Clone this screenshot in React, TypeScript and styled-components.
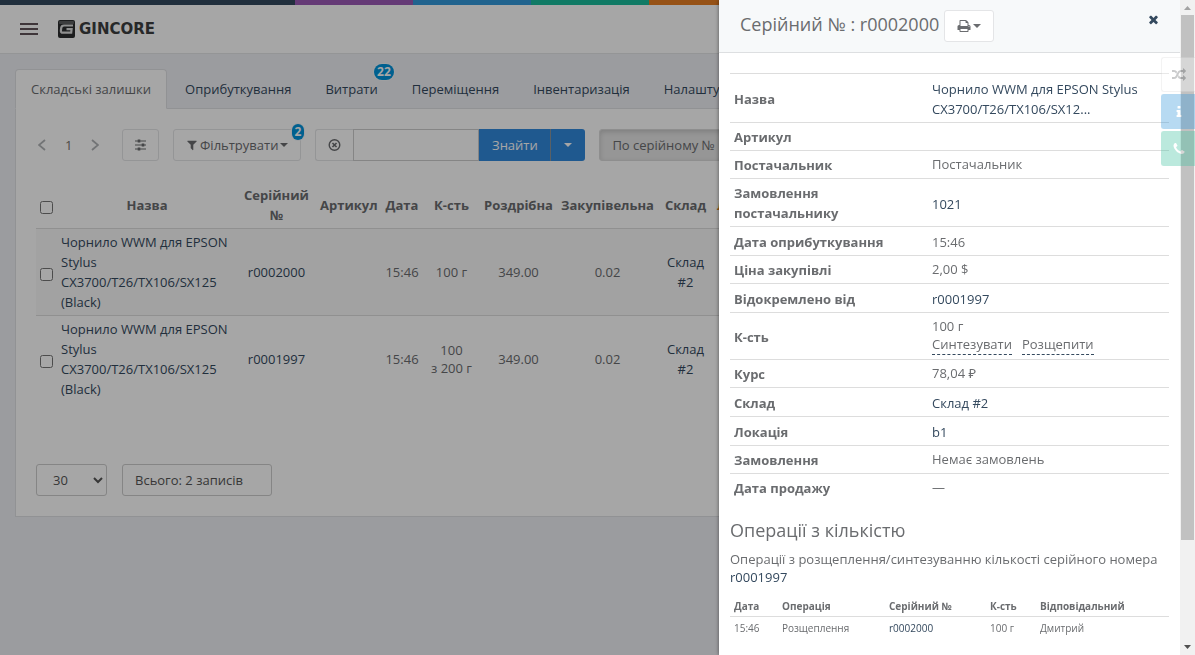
import React from "react";
import styled, { createGlobalStyle, css } from "styled-components";

const GlobalStyle = createGlobalStyle`
  *, *::before, *::after { box-sizing: border-box; }
  html, body { margin: 0; padding: 0; }
  body {
    background: #eff0f5;
    color: #6a6c6f;
    font-family: "Open Sans", "Noto Sans", sans-serif;
    font-size: 13px;
    line-height: 18px;
    overflow: hidden;
  }
  a { color: #34495e; text-decoration: none; }
  button, input, select { font-family: inherit; font-size: 13px; color: inherit; }
  h2, h3, p { margin: 0; font-weight: 400; }
`;

/* ---------- icons ---------- */

const glyphs = {
  times:
    "M1490 1322q0 40-28 68l-136 136q-28 28-68 28t-68-28l-294-294-294 294q-28 28-68 28t-68-28l-136-136q-28-28-28-68t28-68l294-294-294-294q-28-28-28-68t28-68l136-136q28-28 68-28t68 28l294 294 294-294q28-28 68-28t68 28l136 136q28 28 28 68t-28 68l-294 294 294 294q28 28 28 68z",
  filter:
    "M1595 295q17 41-14 70l-493 493v742q0 42-39 59-13 5-25 5-27 0-45-19l-256-256q-19-19-19-45v-486l-493-493q-31-29-14-70 17-39 59-39h1280q42 0 59 39z",
  print:
    "M448 1536h896v-256h-896v256zm0-640h896v-384h-160q-40 0-68-28t-28-68v-160h-640v640zm1152 64q0-26-19-45t-45-19-45 19-19 45 19 45 45 19 45-19 19-45zm128 0v416q0 13-9.5 22.5t-22.5 9.5h-224v160q0 40-28 68t-68 28h-960q-40 0-68-28t-28-68v-160h-224q-13 0-22.5-9.5t-9.5-22.5v-416q0-79 56.5-135.5t135.5-56.5h64v-544q0-40 28-68t68-28h672q40 0 88 20t76 48l152 152q28 28 48 76t20 88v256h64q79 0 135.5 56.5t56.5 135.5z",
  phone:
    "M1600 1240q0 27-10 70.5t-21 68.5q-21 50-122 106-94 51-186 51-27 0-53-3.5t-57.5-12.5-47-14.5-55.5-20.5-49-18q-98-35-175-83-127-79-264-216t-216-264q-48-77-83-175-3-9-18-49t-20.5-55.5-14.5-47-12.5-57.5-3.5-53q0-92 51-186 56-101 106-122 25-11 68.5-21t70.5-10q14 0 21 3 18 6 53 76 11 19 30 54t35 63.5 31 53.5q3 4 17.5 25t21.5 35.5 7 28.5q0 20-28.5 50t-62 55-62 53-28.5 46q0 9 5 22.5t8.5 20.5 14 24 11.5 19q76 137 174 235t235 174q2 1 19 11.5t24 14 20.5 8.5 22.5 5q18 0 46-28.5t53-62 55-62 50-28.5q14 0 28.5 7t35.5 21.5 25 17.5q25 15 53.5 31t63.5 35 54 30q70 35 76 53 3 7 3 21z",
  random:
    "M666 481q-60 92-137 273-22-45-37-72.5t-40.5-63.5-51-56.5-63-35-81.5-14.5h-224q-14 0-23-9t-9-23v-192q0-14 9-23t23-9h224q250 0 410 225zm1126 799q0 14-9 23l-320 320q-9 9-23 9-13 0-22.5-9.5t-9.5-22.5v-192q-32 0-85 .5t-81 1-73-1-71-5-64-10.5-63-18.5-58-28.5-59-40-55-53.5-56-69.5q59-93 136-273 22 45 37 72.5t40.5 63.5 51 56.5 63 35 81.5 14.5h256v-192q0-14 9-23t23-9q12 0 24 10l319 319q9 9 9 23zm0-896q0 14-9 23l-320 320q-9 9-23 9-13 0-22.5-9.5t-9.5-22.5v-192h-256q-48 0-87 15t-69 45-51 61.5-45 77.5q-32 62-78 171-29 66-49.5 111t-54 105-64 100-74 83-90 68.5-106.5 42-128 16.5h-224q-14 0-23-9t-9-23v-192q0-14 9-23t23-9h224q48 0 87-15t69-45 51-61.5 45-77.5q32-62 78-171 29-66 49.5-111t54-105 64-100 74-83 90-68.5 106.5-42 128-16.5h256v-192q0-14 9-23t23-9q12 0 24 10l319 319q9 9 9 23z",
  info:
    "M1216 1344v128q0 26-19 45t-45 19h-512q-26 0-45-19t-19-45v-128q0-26 19-45t45-19h64v-384h-64q-26 0-45-19t-19-45v-128q0-26 19-45t45-19h384q26 0 45 19t19 45v576h64q26 0 45 19t19 45zm-128-1152v192q0 26-19 45t-45 19h-256q-26 0-45-19t-19-45v-192q0-26 19-45t45-19h256q26 0 45 19t19 45z",
};

const Glyph = ({ name, size = 14 }: { name: keyof typeof glyphs; size?: number }) => (
  <svg width={size} height={size} viewBox="0 0 1792 1792" fill="currentColor" aria-hidden="true">
    <path d={glyphs[name]} />
  </svg>
);

const Caret = () => (
  <svg width="8" height="4" viewBox="0 0 8 4" fill="currentColor" aria-hidden="true">
    <path d="M0 0h8L4 4z" />
  </svg>
);

const Chevron = ({ flip = false }: { flip?: boolean }) => (
  <svg width="8" height="12" viewBox="0 0 8 12" fill="none" stroke="currentColor" strokeWidth="1.800" aria-hidden="true">
    <path d={flip ? "M1 1l6 5-6 5" : "M7 1L1 6l6 5"} />
  </svg>
);

const SlidersIcon = () => (
  <svg width="11" height="12" viewBox="0 0 11 12" stroke="currentColor" strokeWidth="1.200" aria-hidden="true">
    <path d="M0 2h11M0 6h11M0 10h11" />
    <path d="M4 .5v3M8 4.500v3M4 8.500v3" strokeWidth="2.600" />
  </svg>
);

const ClearIcon = () => (
  <svg width="14" height="14" viewBox="0 0 14 14" fill="none" stroke="currentColor" aria-hidden="true">
    <circle cx="7" cy="7" r="5.700" strokeWidth="1.500" />
    <path d="M4.800 4.800l4.400 4.400M9.200 4.800l-4.400 4.400" strokeWidth="1.700" />
  </svg>
);

const LogoMark = () => (
  <svg width="17" height="18" viewBox="0 0 17 18" aria-hidden="true">
    <rect width="17" height="18" rx="2" fill="#2b2d2f" />
    <rect x="1" y="1" width="15" height="3" rx="1" fill="#5c5e60" />
    <path d="M15 5.500H6Q3.500 5.500 3.200 8l-.3 2.500q-.2 2.200 2 2.200h8.300l.4-3.500H8.500" fill="none" stroke="#dcdcdc" strokeWidth="2.200" />
  </svg>
);

/* ---------- page ---------- */

const Shell = styled.div`
  min-height: 100vh;
  margin-right: 15px;
  overflow: hidden;
`;

const ColorLine = styled.div`
  height: 5px;
  background: linear-gradient(
    to right,
    #34495e 25%, #9b59b6 25%, #9b59b6 35%, #3498db 35%, #3498db 45%,
    #1abc9c 45%, #1abc9c 55%, #e67e22 55%, #e67e22 85%, #c0392b 85%
  );
`;

const TopBar = styled.header`
  display: flex;
  align-items: center;
  gap: 20px;
  height: 49px;
  padding: 0 20px;
  background: #fff;
  border-bottom: 1px solid #e4e5e7;
`;

const MenuButton = styled.button`
  display: flex;
  flex-direction: column;
  gap: 3px;
  width: 18px;
  padding: 0;
  border: 0;
  background: none;
`;

const MenuLine = styled.span`
  height: 2px;
  background: #62535a;
`;

const Brand = styled.a`
  display: flex;
  align-items: center;
  gap: 4px;
  color: #3c3e40;
  font: bold 15px/18px "DejaVu Sans", sans-serif;
`;

const Content = styled.main`
  padding: 15px;
`;

const Tabs = styled.nav`
  display: flex;
  gap: 2px;
`;

const Tab = styled.a<{ $active?: boolean }>`
  position: relative;
  padding: 10px 15px 8px;
  border: 1px solid transparent;
  border-radius: 4px 4px 0 0;
  white-space: nowrap;
  line-height: 19px;
  ${(p) =>
    p.$active &&
    css`
      margin-bottom: -1px;
      padding-bottom: 9px;
      color: #6a6c6f;
      background: #fff;
      border-color: #dfe0e4;
      border-bottom-color: #fff;
    `}
`;

const Badge = styled.span<{ $corner?: boolean }>`
  position: absolute;
  top: -6px;
  right: ${(p) => (p.$corner ? "-4px" : "-1px")};
  padding: 0 3px;
  border-radius: 8px;
  background: #0094dc;
  color: #fff;
  font-size: 12px;
  font-weight: 700;
  line-height: 16px;
  box-shadow: 0 0 0 1px #f4f6f9;
`;

const Panel = styled.section`
  padding: 20px;
  background: #fff;
  border: 1px solid #dfe0e4;
  overflow: hidden;
`;

const Toolbar = styled.div`
  display: flex;
  gap: 14px;
`;

const Pager = styled.div`
  display: flex;
  align-items: center;
  gap: 19px;
  width: 72px;
  padding-left: 2px;
  color: #b0b2b5;
`;

const PageButton = styled.button`
  display: flex;
  padding: 0;
  border: 0;
  background: none;
`;

const PageNumber = styled.span`
  color: #77736c;
`;

const Button = styled.button<{ $pressed?: boolean }>`
  position: relative;
  display: flex;
  align-items: center;
  justify-content: center;
  gap: 2px;
  height: 32px;
  padding: 0 12px;
  border: 1px solid #e4e5e7;
  border-radius: 3px;
  background: #fff;
  color: #6a6c6f;
  white-space: nowrap;
  ${(p) =>
    p.$pressed &&
    css`
      background: #e6e6e6;
      border-color: #dadada;
      box-shadow: inset 0 2px 5px rgba(0, 0, 0, 0.15);
    `}
`;

const SearchGroup = styled.form`
  display: flex;
`;

const ClearButton = styled(Button)`
  width: 38px;
  border-right: 0;
  border-radius: 3px 0 0 3px;
`;

const SearchInput = styled.input`
  width: 126px;
  height: 32px;
  padding: 0 12px;
  border: 1px solid #ccc;
  background: #fff;
  outline: 0;
`;

const SearchButton = styled(Button)`
  border: 0;
  border-radius: 0;
  background: #3189dc;
  color: #fff;
  width: 71px;
`;

const SearchMenuButton = styled(SearchButton)`
  width: 35px;
  border-left: 1px solid #8a949c;
  border-radius: 0 3px 3px 0;
`;

const Goods = styled.table`
  width: 1108px;
  margin: 21px 0 62px;
  border-collapse: separate;
  border-spacing: 0;
  table-layout: fixed;
  line-height: 20px;
  text-align: center;

  th, td {
    padding: 3px 4px;
    vertical-align: middle;
  }
  td { border-top: 1px solid #ddd; }
  tbody tr:nth-child(odd) td { background: #f9f9f9; }
`;

const NameCell = styled.td`
  text-align: left;
`;

const Quantity = styled.span`
  display: block;
  line-height: 18px;
  white-space: pre-line;
`;

const SortLink = styled.a`
  color: #e67e22;
`;

const Check = styled.input`
  display: block;
  width: 13px;
  height: 13px;
  margin: 4px 0 0;
`;

const PanelFooter = styled.div`
  display: flex;
  gap: 15px;
`;

const PageSize = styled.select`
  width: 71px;
  height: 32px;
  padding: 0 0 0 12px;
  border: 1px solid #ccc;
  border-radius: 3px;
  background: #fff;
  color: #555;
`;

const Total = styled.div`
  width: 150px;
  padding: 6px 12px;
  border: 1px solid #ccc;
  border-radius: 3px;
  color: #555;
`;

/* ---------- drawer ---------- */

const Backdrop = styled.div`
  position: fixed;
  inset: 0;
  z-index: 10;
  background: rgba(0, 0, 0, 0.35);
`;

const Drawer = styled.aside`
  position: fixed;
  top: 0;
  right: 0;
  bottom: 0;
  z-index: 11;
  display: flex;
  width: 476px;
  max-width: 100%;
  background: #fff;
  box-shadow: 0 0 4px rgba(0, 0, 0, 0.5);
`;

const DrawerMain = styled.div`
  flex: 1;
  min-width: 0;
  overflow: hidden;
`;

const DrawerHeader = styled.header`
  display: flex;
  align-items: flex-start;
  gap: 5px;
  height: 53px;
  padding: 10px 20px 10px 21px;
  background: #f7f9fa;
  border-bottom: 1px solid #dddfe1;
`;

const DrawerTitle = styled.h2`
  font-size: 18px;
  line-height: 28px;
  white-space: nowrap;
`;

const CloseButton = styled.button`
  display: flex;
  margin-left: auto;
  padding: 3px 0;
  border: 0;
  background: none;
  color: #34495e;
`;

const DrawerBody = styled.div`
  padding: 20px 11px;
`;

const Details = styled.table`
  width: 100%;
  border-collapse: separate;
  border-spacing: 0;
  table-layout: fixed;

  th, td {
    padding: 4px 4px 3px;
    border-top: 1px solid #ddd;
    text-align: left;
  }
  th {
    width: 198px;
    line-height: 20px;
    vertical-align: middle;
  }
`;

const TextValue = styled.td`
  vertical-align: top;
`;

const LinkValue = styled.td`
  && { padding-top: 5px; }
  line-height: 20px;
  vertical-align: middle;
`;

const Actions = styled.div`
  display: flex;
  gap: 10px;
  line-height: 19px;
  padding-bottom: 1px;
`;

const ActionLink = styled.a`
  color: #6a6c6f;
  border-bottom: 1px dashed #34495e;
`;

const SectionTitle = styled.h3`
  margin-top: 19px;
  font-size: 18px;
  line-height: 20px;
`;

const Note = styled.p`
  margin: 10px 0;
`;

const Operations = styled.table`
  width: 100%;
  border-collapse: separate;
  border-spacing: 0;
  table-layout: fixed;
  font-size: 10px;
  line-height: 14px;

  th, td {
    padding: 3px 4px;
    text-align: left;
  }
  td {
    padding-top: 4px;
    border-top: 1px solid #ddd;
  }
`;

const Scrollbar = styled.div`
  display: flex;
  flex-direction: column;
  align-items: center;
  width: 15px;
  padding: 6px 0;
  background: #f1f1f1;
`;

const ScrollTrack = styled.div`
  flex: 1;
  width: 13px;
  margin: 5px 0;
`;

const ScrollThumb = styled.div`
  height: 84%;
  background: #c1c1c1;
`;

const SideTabs = styled.div`
  position: fixed;
  top: 57px;
  right: 0;
  z-index: 12;
  display: flex;
  flex-direction: column;
  gap: 2px;
  opacity: 0.35;
`;

const SideTab = styled.button<{ $color: string; $ink?: string }>`
  display: flex;
  align-items: center;
  justify-content: center;
  width: 34px;
  height: 35px;
  padding: 0;
  border: 1px solid ${(p) => (p.$color === "#fff" ? "#ddd" : p.$color)};
  border-right: 0;
  border-radius: 3px 0 0 3px;
  background: ${(p) => p.$color};
  color: ${(p) => p.$ink || "#fff"};
`;

const itemName = "Чорнило WWM для EPSON Stylus CX3700/T26/TX106/SX125 (Black)";

const goods = [
  { serial: "r0002000", qty: "100 г" },
  { serial: "r0001997", qty: "100\nз 200 г" },
];

const tabs: { label: string; badge?: string }[] = [
  { label: "Складські залишки" },
  { label: "Оприбуткування" },
  { label: "Витрати", badge: "22" },
  { label: "Переміщення" },
  { label: "Інвентаризація" },
  { label: "Налаштування" },
];

const LinkRow = ({ label, value }: { label: string; value: string }) => (
  <tr>
    <th scope="row">{label}</th>
    <LinkValue><a href="#">{value}</a></LinkValue>
  </tr>
);

const TextRow = ({ label, value }: { label: string; value?: string }) => (
  <tr>
    <th scope="row">{label}</th>
    <TextValue>{value}</TextValue>
  </tr>
);

export default function App() {
  return (
    <>
      <GlobalStyle />
      <Shell>
        <ColorLine />
        <TopBar>
          <MenuButton aria-label="Меню">
            <MenuLine /><MenuLine /><MenuLine />
          </MenuButton>
          <Brand href="#"><LogoMark />GINCORE</Brand>
        </TopBar>
        <Content>
          <Tabs>
            {tabs.map((t, i) => (
              <Tab key={t.label} href="#" $active={i === 0}>
                {t.label}
                {t.badge && <Badge>{t.badge}</Badge>}
              </Tab>
            ))}
          </Tabs>
          <Panel>
            <Toolbar>
              <Pager>
                <PageButton aria-label="Назад"><Chevron /></PageButton>
                <PageNumber>1</PageNumber>
                <PageButton aria-label="Вперед"><Chevron flip /></PageButton>
              </Pager>
              <Button aria-label="Колонки"><SlidersIcon /></Button>
              <Button>
                <Glyph name="filter" size={12} />
                Фільтрувати
                <Caret />
                <Badge $corner>2</Badge>
              </Button>
              <SearchGroup>
                <ClearButton type="button" aria-label="Очистити"><ClearIcon /></ClearButton>
                <SearchInput aria-label="Пошук" />
                <SearchButton type="button">Знайти</SearchButton>
                <SearchMenuButton type="button" aria-label="Варіанти пошуку"><Caret /></SearchMenuButton>
              </SearchGroup>
              <Button $pressed>По серійному №</Button>
            </Toolbar>
            <Goods>
              <colgroup>
                <col width="21" /><col width="180" /><col width="79" /><col width="65" /><col width="42" />
                <col width="57" /><col width="77" /><col width="101" /><col width="55" /><col />
              </colgroup>
              <thead>
                <tr>
                  <th><Check type="checkbox" aria-label="Вибрати всі" /></th>
                  <th>Назва</th>
                  <th>Серійний №</th>
                  <th>Артикул</th>
                  <th>Дата</th>
                  <th>К-сть</th>
                  <th>Роздрібна</th>
                  <th>Закупівельна</th>
                  <th>Склад</th>
                  <NameCell as="th"><SortLink href="#">Локація</SortLink></NameCell>
                </tr>
              </thead>
              <tbody>
                {goods.map((g) => (
                  <tr key={g.serial}>
                    <td><Check type="checkbox" aria-label={g.serial} /></td>
                    <NameCell><a href="#">{itemName}</a></NameCell>
                    <td><a href="#">{g.serial}</a></td>
                    <td />
                    <td>15:46</td>
                    <td><Quantity>{g.qty}</Quantity></td>
                    <td>349.00</td>
                    <td>0.02</td>
                    <td><a href="#">Склад #2</a></td>
                    <td />
                  </tr>
                ))}
              </tbody>
            </Goods>
            <PanelFooter>
              <PageSize aria-label="Записів на сторінці" defaultValue="30">
                <option>30</option>
                <option>50</option>
              </PageSize>
              <Total>Всього: 2 записів</Total>
            </PanelFooter>
          </Panel>
        </Content>
      </Shell>

      <Backdrop />

      <Drawer>
        <DrawerMain>
          <DrawerHeader>
            <DrawerTitle>Серійний № : r0002000</DrawerTitle>
            <Button aria-label="Друк"><Glyph name="print" /><Caret /></Button>
            <CloseButton aria-label="Закрити"><Glyph name="times" size={13} /></CloseButton>
          </DrawerHeader>
          <DrawerBody>
            <Details>
              <tbody>
                <LinkRow label="Назва" value="Чорнило WWM для EPSON Stylus CX3700/T26/TX106/SX12..." />
                <TextRow label="Артикул" />
                <TextRow label="Постачальник" value="Постачальник" />
                <LinkRow label="Замовлення постачальнику" value="1021" />
                <tr>
                  <th scope="row">Дата оприбуткування</th>
                  <LinkValue>15:46</LinkValue>
                </tr>
                <TextRow label="Ціна закупівлі" value="2,00 $" />
                <LinkRow label="Відокремлено від" value="r0001997" />
                <tr>
                  <th scope="row">К-сть</th>
                  <TextValue>
                    100 г
                    <Actions>
                      <ActionLink href="#">Синтезувати</ActionLink>
                      <ActionLink href="#">Розщепити</ActionLink>
                    </Actions>
                  </TextValue>
                </tr>
                <TextRow label="Курс" value="78,04 ₽" />
                <LinkRow label="Склад" value="Склад #2" />
                <LinkRow label="Локація" value="b1" />
                <TextRow label="Замовлення" value="Немає замовлень" />
                <TextRow label="Дата продажу" value="—" />
              </tbody>
            </Details>
            <SectionTitle>Операції з кількістю</SectionTitle>
            <Note>
              Операції з розщеплення/синтезуванню кількості серійного номера <a href="#">r0001997</a>
            </Note>
            <Operations>
              <colgroup>
                <col width="48" /><col width="107" /><col width="101" /><col width="50" /><col />
              </colgroup>
              <thead>
                <tr>
                  <th>Дата</th><th>Операція</th><th>Серійний №</th><th>К-сть</th><th>Відповідальний</th>
                </tr>
              </thead>
              <tbody>
                <tr>
                  <td>15:46</td><td>Розщеплення</td><td><a href="#">r0002000</a></td><td>100 г</td><td>Дмитрий</td>
                </tr>
              </tbody>
            </Operations>
          </DrawerBody>
        </DrawerMain>
        <Scrollbar aria-hidden="true">
          <svg width="7" height="4" viewBox="0 0 7 4" fill="#a3a3a3"><path d="M0 4h7L3.500 0z" /></svg>
          <ScrollTrack><ScrollThumb /></ScrollTrack>
          <svg width="7" height="4" viewBox="0 0 7 4" fill="#505050"><path d="M0 0h7L3.500 4z" /></svg>
        </Scrollbar>
      </Drawer>

      <SideTabs>
        <SideTab $color="#fff" $ink="#6a6c6f" aria-label="Перемкнути"><Glyph name="random" /></SideTab>
        <SideTab $color="#3498db" aria-label="Інформація"><Glyph name="info" /></SideTab>
        <SideTab $color="#3fc3a0" aria-label="Дзвінки"><Glyph name="phone" /></SideTab>
      </SideTabs>
    </>
  );
}
